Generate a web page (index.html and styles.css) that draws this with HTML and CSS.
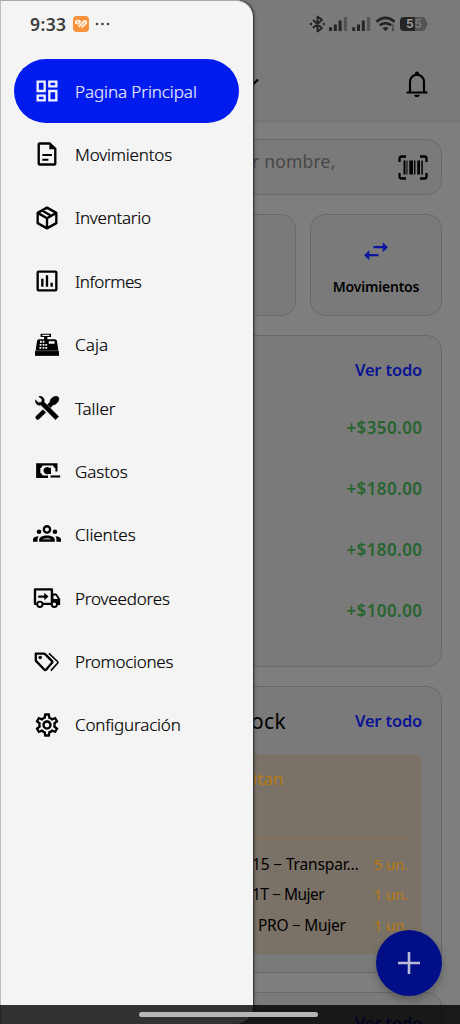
FILE: index.html
```html
<!DOCTYPE html>
<html lang="es">
<head>
<meta charset="utf-8">
<meta name="viewport" content="width=device-width, initial-scale=1">
<title>Pagina Principal</title>
<link rel="stylesheet" href="styles.css">
</head>
<body>
<div class="screen">
  <header class="topbar">
    <svg class="chevron" width="12" height="10" viewBox="0 0 12 10"><path d="M1 2.500l5 5 5-5" fill="none" stroke="#000" stroke-width="2.200"/></svg>
    <svg class="bell" width="24" height="28" viewBox="0 0 24 28"><path d="M1.500 22.500h21M5 22.500V12a7 7.400 0 0 1 14 0v10.500" fill="none" stroke="#000" stroke-width="2.200"/><circle cx="12" cy="3.700" r="2.100"/><path d="M9.300 24.800h5.400a2.700 2.300 0 0 1-5.400 0z"/></svg>
  </header>
  <main class="content">
    <div class="search">
      <span class="search-text">r nombre,</span>
      <svg class="barcode" width="30" height="26" viewBox="0 0 30 26"><path d="M1.500 7V3.500a2 2 0 0 1 2-2H8M22 1.500h4.500a2 2 0 0 1 2 2V7M28.500 18v3.500a2 2 0 0 1-2 2H22M8 23.500H3.500a2 2 0 0 1-2-2V18" fill="none" stroke="#000" stroke-width="2.300"/><path d="M5.500 5.500h2v14h-2zM8.500 5.500h1v14h-1zM11.300 5.500H15v14h-3.700zM16 5.500h1.400v14H16zM19.300 5.500h2.700v14h-2.700zM23.300 5.500h1.500v14h-1.500z"/></svg>
    </div>
    <div class="quick">
      <div class="quick-card"></div>
      <div class="quick-card"></div>
      <div class="quick-card">
        <svg width="26" height="20" viewBox="0 0 26 20"><path d="M10.500 6.200h10M5.500 14.200h10" stroke="#0a16a0" stroke-width="2.200"/><path d="M19.700 1.200l5.200 5-5.200 5zM6.300 9.200l-5.200 5 5.200 5z" fill="#0a16a0"/></svg>
        <span class="quick-label">Movimientos</span>
      </div>
    </div>
    <section class="card sales">
      <div class="link">Ver todo</div>
      <div class="amounts">
        <span>+$350.00</span><span>+$180.00</span><span>+$180.00</span><span>+$100.00</span>
      </div>
    </section>
    <section class="card stock">
      <div class="stock-head"><span class="stock-title">ock</span><span class="link">Ver todo</span></div>
      <div class="alert">
        <div class="alert-title">itan</div>
        <div class="item"><span class="name n1">15 − Transpar…</span><span class="qty">5 un.</span></div>
        <div class="item"><span class="name n2">1T − Mujer</span><span class="qty">1 un.</span></div>
        <div class="item"><span class="name n3">PRO − Mujer</span><span class="qty">1 un.</span></div>
      </div>
    </section>
    <section class="card last"><div class="link">Ver todo</div></section>
  </main>
</div>

<div class="fab"><svg width="24" height="24" viewBox="0 0 24 24"><path d="M12 1v22M1 12h22" stroke="#b9bbd6" stroke-width="2.600"/></svg></div>

<nav class="drawer">
  <a class="nav-item active"><svg viewBox="0 0 24 24"><path d="M19 5v2h-4V5h4M9 5v6H5V5h4m10 8v6h-4v-6h4M9 17v2H5v-2h4M21 3h-8v6h8V3zM11 3H3v10h8V3zm10 8h-8v10h8V11zm-10 4H3v6h8v-6z"/></svg><span class="t1">Pagina Principal</span></a>
  <a class="nav-item"><svg viewBox="0 0 24 24"><path class="line" d="M14.500 3H5.500a.6.6 0 0 0-.6.6v16.800a.6.6 0 0 0 .6.6h13a.6.6 0 0 0 .6-.6V7.500z"/><path d="M14 2.500V8h6zM8 12h8.200v1.800H8zM8 16h5.200v1.800H8z"/></svg><span class="t2">Movimientos</span></a>
  <a class="nav-item"><svg viewBox="0 0 24 24"><path class="line" d="M12 3.100l8 4.500v8.800l-8 4.500-8-4.500V7.600zM4 7.600l8 4.600 8-4.600M12 12.200V21M7.700 5.500l8.200 4.700"/></svg><span class="t3">Inventario</span></a>
  <a class="nav-item"><svg viewBox="0 0 24 24"><rect class="line" x="4" y="4" width="16" height="16" rx=".8"/><path d="M7 10h2v7H7zM11 7h2v10h-2zM15 13.500h2V17h-2z"/></svg><span class="t4">Informes</span></a>
  <a class="nav-item"><svg viewBox="0 0 24 24"><g transform="translate(0 -.6)"><path fill-rule="evenodd" d="M6.500 3h9v2.800h-3.200v1.900h6.500q1.400 0 1.700 1.300l1.300 8.500H2.200L3.500 9q.3-1.300 1.700-1.300h4.300V5.800h-3zM8 3.900v1h6v-1zM13.500 9.300v2.300h5V9.300zM6 9v1.600h1.500V9zm2.300 0v1.600h1.500V9zM5.700 11.700v1.500h1.600v-1.500zm2.600 0v1.500h1.500v-1.500zm2.300 0v1.500h1.500v-1.500zM5.500 14.300v1.500h1.700v-1.500zm2.800 0v1.500h1.500v-1.500zm2.300 0v1.500h1.600v-1.500z"/><path d="M1.700 17.800h20.600v4.100H1.700z"/></g></svg><span class="t5">Caja</span></a>
  <a class="nav-item"><svg viewBox="0 0 24 24"><path d="M4.900 2.100Q7.400 1.600 8.800 3.200q1.400 1.500.7 3.700L22 19.300 19.300 22 6.700 9.500q-2 .6-3.500-.7Q1.600 7.400 2.100 5l2.600 2.500 2.800-.7.300-2.100zM8.500 13.400l2.400 2.400-5.700 5.700q-1.200.9-2.300-.1-1.200-1.200-.3-2.400zM15 11.700l-2.600-2.600 2.200-2.300q-.2-1.500.9-2.700l2.300-1.800q2.700-.9 3.900.3 1.100 1.300.1 3.700L19.600 8.500q-1.200.9-2.500.9z" stroke="#000" stroke-width=".4"/></svg><span class="t6">Taller</span></a>
  <a class="nav-item"><svg viewBox="0 0 24 24"><path fill-rule="evenodd" d="M2.700 5.300h18.300v7.200h-1.800V9.500q-1.700-.4-2-2.200h-9q-.3 1.800-1.900 2.200v4.300q1.600.4 1.900 2.100h4.700v2H2.700z"/><path d="M8.900 11.800a3.100 3.100 0 0 1 5.200-2.300l1.300-.6v5.600h-2.300a3.100 3.100 0 0 1-4.200-2.700z"/><path d="M15 15.800h8.300v1.800H15z"/></svg><span class="t7">Gastos</span></a>
  <a class="nav-item"><svg viewBox="0 0 24 24"><g transform="translate(0 -.3)"><circle class="line" cx="12" cy="7.500" r="2.700"/><circle cx="5.200" cy="9.500" r="2"/><circle cx="18.800" cy="9.500" r="2"/><path d="M5.300 18v-1.700c0-2.100 3-3.500 6.700-3.500s6.700 1.400 6.700 3.500V18zM0 18v-1.700c0-1.600 1.800-2.900 4.800-2.900q-.9 1.300-.9 2.900V18zM24 18v-1.700c0-1.600-1.800-2.900-4.800-2.900q.9 1.300.9 2.900V18z"/><path fill="#8b8b8b" d="M8 16.200q1.500-1.500 4-1.500t4 1.500z"/></g></svg><span class="t8">Clientes</span></a>
  <a class="nav-item"><svg viewBox="0 0 24 24"><g transform="translate(0 .6)"><path class="line" d="M3 16.500H1.700V4h14.500v12.500H8"/><path fill-rule="evenodd" d="M15.500 7.500h3.900q.8 0 1.200.7l2.700 4v5.300h-7.800zM17.500 9.200v3h3.900l-1.900-3z"/><path d="M4.500 9.300h5.200V7l3.600 3.200-3.600 3.200v-2.200H4.500z"/><circle class="hole" cx="5.900" cy="16.800" r="2.300"/><circle class="hole" cx="18.300" cy="16.800" r="2.300"/></g></svg><span class="t9">Proveedores</span></a>
  <a class="nav-item"><svg viewBox="0 0 24 24"><path class="line" d="M2.900 4.800h6.200q.7 0 1.200.5l6 6q.7.700 0 1.400l-5.100 5.900q-.7.700-1.400 0l-6.900-7.100q-.5-.5-.5-1.200V4.800z"/><circle cx="6.200" cy="8.200" r="1.500"/><path class="line thin" d="M13.700 4.600l7.300 7q.8.700 0 1.500l-5.700 6.300"/></svg><span class="t10">Promociones</span></a>
  <a class="nav-item"><svg viewBox="0 0 24 24"><path d="M19.430 12.980c.04-.32.07-.64.07-.98s-.03-.66-.07-.98l2.110-1.650c.19-.15.24-.42.12-.64l-2-3.460c-.09-.16-.26-.25-.44-.25-.06 0-.12.01-.17.030l-2.490 1c-.52-.4-1.080-.73-1.690-.98l-.38-2.650C14.460 2.180 14.250 2 14 2h-4c-.25 0-.46.18-.49.42l-.38 2.650c-.61.25-1.170.59-1.690.98l-2.490-1c-.06-.02-.12-.03-.18-.03-.17 0-.34.09-.43.250l-2 3.460c-.13.220-.07.490.12.640l2.110 1.650c-.04.320-.07.650-.07.980s.03.660.07.980l-2.110 1.650c-.19.150-.24.420-.12.640l2 3.460c.09.160.26.250.44.250.06 0 .12-.01.17-.03l2.490-1c.52.400 1.080.730 1.690.980l.38 2.650c.03.240.24.420.49.420h4c.25 0 .46-.18.49-.42l.38-2.650c.61-.25 1.170-.59 1.690-.98l2.490 1c.06.020.12.030.18.030.17 0 .34-.09.43-.25l2-3.460c.12-.22.07-.49-.12-.64l-2.110-1.650zm-1.980-1.710c.04.310.05.520.05.730 0 .210-.02.430-.05.730l-.14 1.130.89.700 1.080.840-.7 1.210-1.270-.51-1.040-.42-.9.680c-.43.320-.84.560-1.250.730l-1.060.430-.16 1.130-.2 1.350h-1.400l-.19-1.350-.16-1.130-1.060-.43c-.43-.18-.83-.41-1.230-.71l-.91-.7-1.060.430-1.270.510-.7-1.210 1.080-.84.890-.7-.14-1.130c-.03-.31-.05-.54-.05-.74s.02-.43.05-.73l.14-1.130-.89-.7-1.080-.84.700-1.210 1.270.510 1.040.42.900-.68c.43-.32.840-.56 1.250-.73l1.060-.43.160-1.130.200-1.350h1.390l.190 1.350.160 1.130 1.060.430c.43.180.83.410 1.230.710l.91.700 1.060-.43 1.270-.51.700 1.210-1.070.850-.89.700.14 1.130zM12 8c-2.210 0-4 1.790-4 4s1.790 4 4 4 4-1.790 4-4-1.790-4-4-4zm0 6c-1.100 0-2-.9-2-2s.9-2 2-2 2 .9 2 2-.9 2-2 2z"/></svg><span class="t11">Configuración</span></a>
</nav>

<div class="status">
  <span class="time">9:33</span>
  <svg class="app" width="16" height="16" viewBox="0 0 16 16"><rect width="16" height="16" rx="4" fill="#f8923a"/><path d="M3 8V5.800q1.500-2.500 4.200-.3L4.300 8.400M5.600 10.900L11.300 5q2.300-.3 1.800 2L8.500 11.700" fill="none" stroke="#fff3e4" stroke-width="1.800" stroke-linejoin="round"/></svg>
  <svg class="dots" width="15" height="4" viewBox="0 0 15 4" fill="#444"><circle cx="2" cy="2" r="1.300"/><circle cx="7.500" cy="2" r="1.300"/><circle cx="13" cy="2" r="1.300"/></svg>
  <svg class="signals" width="120" height="18" viewBox="0 0 120 18" fill="#252525">
    <path d="M4 5l9 8.200-4.500 3.300V1.500L13 4.800 4 13" fill="none" stroke="#252525" stroke-width="1.900" stroke-linejoin="round"/><circle cx="2" cy="9" r="1.200"/><circle cx="14.800" cy="9" r="1.200"/>
    <path d="M20 12.300h3V16h-3zM24.800 9.500h3V16h-3zM29.600 5.500h3V16h-3zM43.200 12.300h3V16h-3zM48 9.500h3V16h-3zM52.800 5.500h3V16h-3z"/><path fill="#545454" d="M34.800 2H38v14h-3.200zM58 2h3.200v14H58z"/>
    <path d="M67.500 6.700q9-7.500 18 0M70.800 10.300q5.700-4.500 11.400 0" fill="none" stroke="#252525" stroke-width="2.600"/><path d="M73.500 13q3-2 6 0l-3 3.200z"/><path fill="#4b4b4b" d="M83 9.500h2v2h-2zM83 12.500h2V16h-2z"/>
    <path fill="#555" d="M95 2h18q4 0 4 4l1 1q1.500 2 0 4l-1 1q0 4-4 4H95z"/><path d="M106 2H95q-4 0-4 4v6q0 4 4 4h11z"/>
    <text x="97" y="13.200" class="battery">5</text><text x="105.200" y="13.200" class="battery dim">5</text>
  </svg>
</div>
<div class="navbar"><div class="handle"></div></div>
</body>
</html>
```

FILE: styles.css
```css
* { box-sizing: border-box; }
body {
  margin: 0;
  width: 460px;
  height: 1024px;
  overflow: hidden;
  position: relative;
  background: #7e7e7e;
  font-family: "Noto Sans", "Open Sans", sans-serif;
  color: #000;
}
svg { display: block; flex: none; }
.screen { height: 1024px; overflow: hidden; }

.topbar {
  height: 121px;
  padding: 70px 31px 0 247px;
  display: flex;
  justify-content: space-between;
  background: #7a7a7a;
  border-bottom: 1px solid #737373;
  box-shadow: 0 1px 2px #747474;
}
.chevron { margin-top: 7px; }
.content { padding: 18px 18px 0; display: flex; flex-direction: column; gap: 19px; }

.search {
  height: 56px;
  display: flex;
  justify-content: space-between;
  padding: 8px 13px 0 233px;
  border: 1px solid #696969;
  border-radius: 15px;
  background: #7a7a7a;
}
.search-text { font-size: 17.500px; line-height: 27px; letter-spacing: .2px; color: #484848; white-space: nowrap; }
.barcode { margin-top: 7px; }

.quick { display: grid; grid-template-columns: repeat(3, 1fr); gap: 14px; }
.quick-card {
  height: 102px;
  display: flex;
  flex-direction: column;
  align-items: center;
  padding-top: 26px;
  border: 1px solid #696969;
  border-radius: 15px;
  background: #7a7a7a;
}
.quick-label { margin-top: 15px; font-size: 14px; line-height: 22px; font-weight: 600; letter-spacing: -.2px; }

.card { border: 1px solid #696969; border-radius: 15px; background: #7a7a7a; padding: 0 19px; }
.link { font-size: 16.500px; line-height: 24px; font-weight: 600; letter-spacing: -.2px; color: #0a1494; text-align: right; }
.sales { height: 332px; padding-top: 22px; }
.amounts { display: flex; flex-direction: column; text-align: right; margin-top: 15px; }
.amounts span { height: 61px; line-height: 61px; font-size: 17px; font-weight: 600; letter-spacing: .4px; margin-right: -.4px; color: #286430; }

.stock { height: 287px; padding-top: 19px; }
.stock-head { display: flex; justify-content: space-between; align-items: center; padding-left: 213px; height: 30px; }
.stock-title { font-size: 21px; line-height: 28px; letter-spacing: .4px; }
.alert { height: 200px; margin-top: 18px; padding: 0 14px; border-radius: 7px; background: #7b7267; overflow: hidden; }
.alert-title {
  height: 85px;
  padding: 12px 0 0 201px;
  margin-bottom: 10px;
  font-size: 17px;
  line-height: 25px;
  color: #b87812;
  border-bottom: 1px solid #8d7148;
}
.item { display: flex; justify-content: space-between; height: 30.400px; line-height: 30px; font-size: 15.500px; letter-spacing: -.15px; white-space: nowrap; }
.name { padding-left: 200px; }
.n3 { padding-left: 206px; letter-spacing: -.3px; }
.n2 { letter-spacing: -.5px; }
.qty { color: #b87812; font-size: 15px; }
.last { height: 120px; padding-top: 18px; }

.fab {
  position: absolute;
  left: 376px;
  top: 930px;
  width: 66px;
  height: 66px;
  border-radius: 50%;
  display: grid;
  place-items: center;
  background: #000f88;
  box-shadow: 0 4px 8px rgba(0, 0, 0, .25);
}

.drawer {
  position: absolute;
  inset: 0 auto 0 0;
  width: 253px;
  padding: 58.400px 14px 0;
  background: #f4f4f4;
  border-top: 1px solid #aaa;
  border-left: 1px solid #bbb;
  border-radius: 0 17px 17px 0;
  box-shadow: 1px 0 1px #333, 2px 0 3px rgba(0, 0, 0, .25);
}
.nav-item {
  display: flex;
  align-items: center;
  gap: 14px;
  width: 225px;
  height: 63.400px;
  margin-left: -1px;
  padding-left: 19px;
  border-radius: 32px;
  font-size: 17px;
  font-weight: 300;
  color: #000;
  -webkit-text-stroke: .2px currentColor;
  white-space: nowrap;
}
.nav-item svg { width: 28px; height: 28px; fill: #000; overflow: visible; }
.nav-item .line { fill: none; stroke: #000; stroke-width: 2; stroke-linejoin: round; }
.nav-item .thin { stroke-width: 1.400; }
.nav-item .hole { fill: #f4f4f4; stroke: #000; stroke-width: 1.700; }
.nav-item.active { background: #001bee; color: #e8eaff; }
.nav-item.active svg { fill: #f0f1ff; }
.t1, .t6, .t7, .t8 { letter-spacing: -.08px; }
.t2, .t9, .t11 { letter-spacing: -.18px; }
.t3, .t10 { letter-spacing: -.28px; }
.t4 { letter-spacing: -.45px; }
.t5 { letter-spacing: .1px; }

.status { position: absolute; left: 30px; top: 14px; width: 400px; height: 20px; display: flex; align-items: center; }
.time { width: 43px; font-size: 17.500px; font-weight: 600; line-height: 20px; letter-spacing: .4px; color: #3e3e3e; }
.dots { margin-left: 6px; }
.signals { margin-left: 199px; }
.battery { font: 700 12px Inter, sans-serif; fill: #999; }
.battery.dim { fill: #777; }

.navbar { position: absolute; left: 0; right: 0; bottom: 0; height: 19px; background: rgba(0, 0, 0, .8); }
.handle { width: 179px; height: 5px; margin: 7px 0 0 139px; border-radius: 3px; background: #b5b5b5; }
```
